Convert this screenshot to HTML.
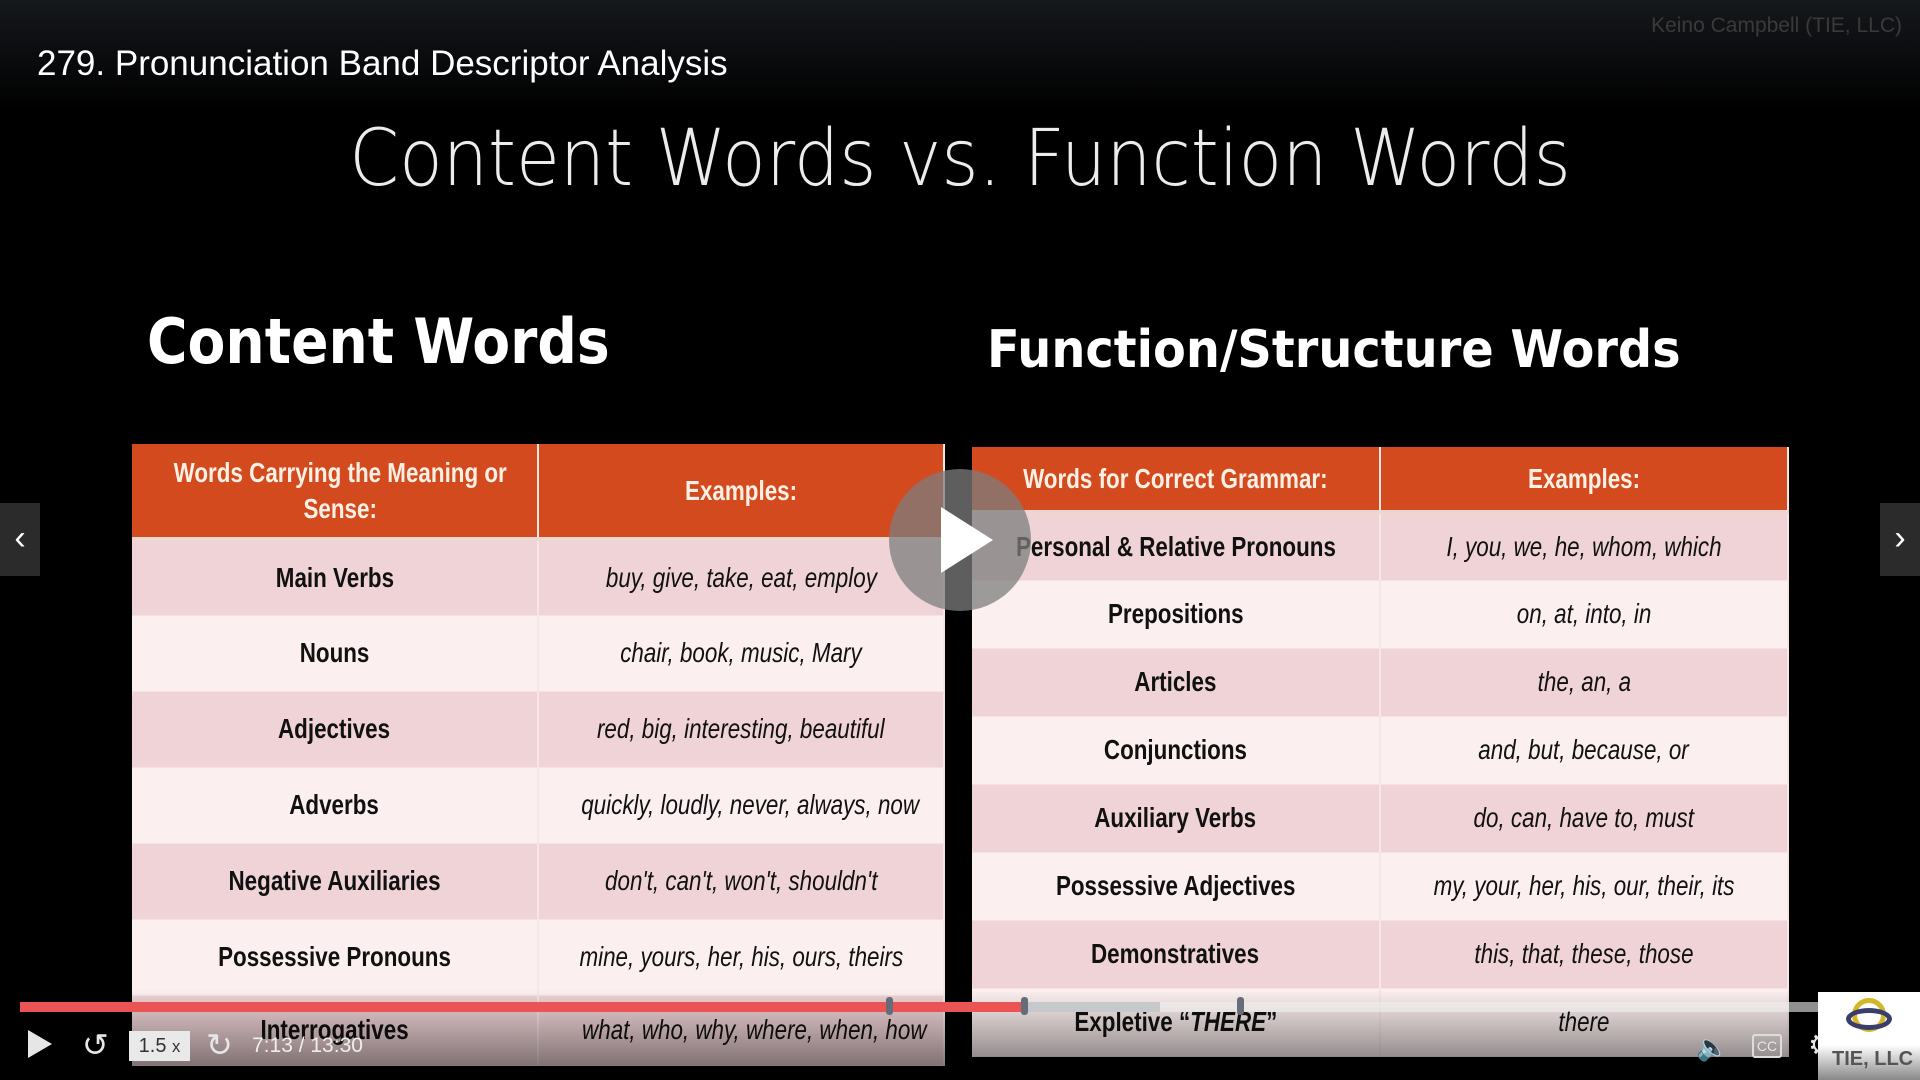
<!DOCTYPE html>
<html><head><meta charset="utf-8">
<style>
*{margin:0;padding:0;box-sizing:border-box}
body{width:1920px;height:1080px;background:#000;overflow:hidden;position:relative;font-family:"Liberation Sans",sans-serif}
.top{position:absolute;left:0;top:0;width:1920px;height:110px;background:linear-gradient(#15181c,#000)}
.title{position:absolute;left:37px;top:44px;color:#fff;font-size:35px}
.wm{position:absolute;right:18px;top:14px;color:#3a3a3a;font-size:21px}
.h1{position:absolute;left:0;width:1920px;top:114px;text-align:center;color:#ececec;font-size:78px;font-family:"DejaVu Sans","Liberation Sans",sans-serif;font-weight:200;transform:scaleX(0.915);white-space:nowrap}
.h2{position:absolute;color:#fff;font-weight:bold;font-family:"DejaVu Sans",sans-serif;transform-origin:left center;white-space:nowrap}
table{position:absolute;border-collapse:collapse;font-family:"Liberation Sans",sans-serif;table-layout:fixed}
td,th{text-align:center;border-right:2px solid #f6e6e6;white-space:nowrap;overflow:hidden}
th{background:#d44a1f;color:#fdf0e4;font-weight:bold;font-size:28px;line-height:36px;border-bottom:4px solid #f0d6d0}
td{color:#111;font-size:28px;border-bottom:1px solid #f3e3e3}
td span,th span{display:inline-block;transform:scaleX(0.8)}
td.b{font-weight:bold}td.i{font-style:italic}
tr:nth-child(even) td{background:#efd3d6}
tr:nth-child(odd) td{background:#fcefef}
.arrow{position:absolute;top:503px;width:40px;height:73px;background:#2b2b2b;color:#fff;font-size:34px;text-align:center;line-height:70px}
.play{position:absolute;left:889px;top:469px;width:142px;height:142px;border-radius:50%;background:rgba(125,125,125,.75)}
.play:after{content:"";position:absolute;left:52px;top:38px;border-left:52px solid #fff;border-top:33px solid transparent;border-bottom:33px solid transparent}
.grad{position:absolute;left:0;top:990px;width:1920px;height:90px;background:linear-gradient(rgba(0,0,0,0),rgba(0,0,0,.55))}
.bar{position:absolute;top:1002px;height:10px}
.mk{position:absolute;top:997px;width:7px;height:18px;border-radius:3px;background:#666d78}
.ctl{position:absolute;color:#e6e6e6;font-size:30px;top:1026px}
</style></head><body>
<div class="top"></div>
<div class="title">279. Pronunciation Band Descriptor Analysis</div>
<div class="wm">Keino Campbell (TIE, LLC)</div>
<div class="h1">Content Words vs. Function Words</div>
<div class="h2" style="left:147px;top:305px;font-size:62px;transform:scaleX(0.89)">Content Words</div>
<div class="h2" style="left:987px;top:320px;font-size:52px;transform:scaleX(0.92)">Function/Structure Words</div>

<table style="left:132px;top:444px;width:812px">
<colgroup><col style="width:406px"><col style="width:406px"></colgroup>
<tr><th style="height:95px"><span>Words Carrying the Meaning or<br>Sense:</span></th><th><span>Examples:</span></th></tr>
<tr><td class="b" style="height:76px"><span>Main Verbs</span></td><td class="i"><span>buy, give, take, eat, employ</span></td></tr>
<tr><td class="b" style="height:76px"><span>Nouns</span></td><td class="i"><span>chair, book, music, Mary</span></td></tr>
<tr><td class="b" style="height:76px"><span>Adjectives</span></td><td class="i"><span>red, big, interesting, beautiful</span></td></tr>
<tr><td class="b" style="height:76px"><span>Adverbs</span></td><td class="i"><span>quickly, loudly, never, always, now</span></td></tr>
<tr><td class="b" style="height:76px"><span>Negative Auxiliaries</span></td><td class="i"><span>don't, can't, won't, shouldn't</span></td></tr>
<tr><td class="b" style="height:76px"><span>Possessive Pronouns</span></td><td class="i"><span>mine, yours, her, his, ours, theirs</span></td></tr>
<tr><td class="b" style="height:70px"><span>Interrogatives</span></td><td class="i"><span>what, who, why, where, when, how</span></td></tr>
</table>

<table style="left:972px;top:447px;width:816px">
<colgroup><col style="width:408px"><col style="width:408px"></colgroup>
<tr><th style="height:65px"><span>Words for Correct Grammar:</span></th><th><span>Examples:</span></th></tr>
<tr><td class="b" style="height:68px"><span>Personal &amp; Relative Pronouns</span></td><td class="i"><span>I, you, we, he, whom, which</span></td></tr>
<tr><td class="b" style="height:68px"><span>Prepositions</span></td><td class="i"><span>on, at, into, in</span></td></tr>
<tr><td class="b" style="height:68px"><span>Articles</span></td><td class="i"><span>the, an, a</span></td></tr>
<tr><td class="b" style="height:68px"><span>Conjunctions</span></td><td class="i"><span>and, but, because, or</span></td></tr>
<tr><td class="b" style="height:68px"><span>Auxiliary Verbs</span></td><td class="i"><span>do, can, have to, must</span></td></tr>
<tr><td class="b" style="height:68px"><span>Possessive Adjectives</span></td><td class="i"><span>my, your, her, his, our, their, its</span></td></tr>
<tr><td class="b" style="height:68px"><span>Demonstratives</span></td><td class="i"><span>this, that, these, those</span></td></tr>
<tr><td class="b" style="height:68px"><span>Expletive “<i>THERE</i>”</span></td><td class="i"><span>there</span></td></tr>
</table>

<div class="arrow" style="left:0">&#8249;</div>
<div class="arrow" style="right:0">&#8250;</div>
<div class="play"></div>
<div class="grad"></div>
<div class="bar" style="left:1160px;width:658px;background:rgba(240,240,240,.6)"></div>
<div class="bar" style="left:1024px;width:136px;background:#c6c8cc"></div>
<div class="bar" style="left:20px;width:1004px;background:#ea5455"></div>
<div class="mk" style="left:886px"></div><div class="mk" style="left:1021px"></div><div class="mk" style="left:1237px"></div>
<div class="ctl" style="left:28px;top:1030px;width:0;height:0;border-left:24px solid #e6e6e6;border-top:14px solid transparent;border-bottom:14px solid transparent"></div>
<div class="ctl" style="left:82px;font-size:32px">&#8634;</div>
<div class="ctl" style="left:129px;top:1031px;width:61px;height:30px;background:#e9e9e9;color:#333;font-size:20px;text-align:center;line-height:30px">1.5 <small>x</small></div>
<div class="ctl" style="left:206px;font-size:32px">&#8635;</div>
<div class="ctl" style="left:252px;top:1034px;font-size:21px;color:#eee;white-space:nowrap">7:13 / 13:30</div>
<div class="ctl" style="left:1696px;font-size:26px;top:1032px">&#128264;</div>
<div class="ctl" style="left:1752px;top:1034px;width:30px;height:24px;border:2px solid #ddd;border-radius:3px;font-size:14px;text-align:center;line-height:20px">CC</div>
<div class="ctl" style="left:1808px;font-size:30px;top:1028px">&#9881;</div>
<div style="position:absolute;left:1818px;top:992px;width:102px;height:88px;background:linear-gradient(#fff 60%,#888);overflow:hidden">
<div style="position:absolute;left:34px;top:6px;width:34px;height:34px;border:5px solid #d4b62a;border-radius:50%"></div>
<div style="position:absolute;left:28px;top:16px;width:46px;height:22px;border:5px solid #3a3f6a;border-radius:50%"></div>
<div style="position:absolute;left:14px;top:56px;font-weight:bold;font-size:20px;color:#555;white-space:nowrap">TIE, LLC</div>
</div>
</body></html>
